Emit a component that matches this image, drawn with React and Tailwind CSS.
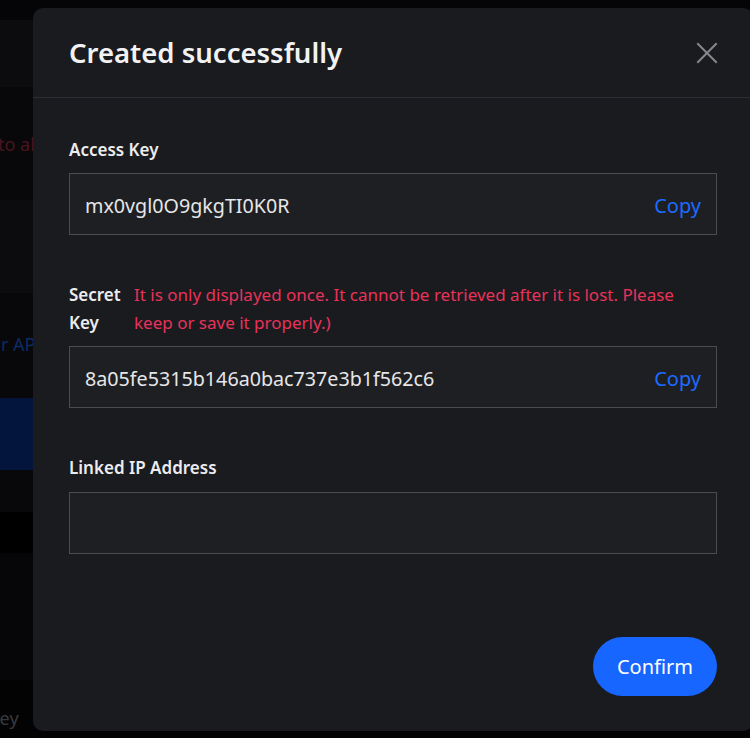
import { useState } from "react";

function Field({ value, copy }) {
  return (
    <div className="flex h-[62px] items-center justify-between border border-[#4b4c50] bg-[#1e1f22] px-[15px] pt-[3px]">
      <span className="text-[19.7px] text-[#e6e6e8]">{value}</span>
      {copy && (
        <button className="text-[20px] text-[#1c6bff]">Copy</button>
      )}
    </div>
  );
}

export default function App() {
  const [ip, setIp] = useState("");

  return (
    <div
      className="relative h-[738px] w-[750px] overflow-hidden bg-[#050507]"
      style={{ fontFamily: '"Noto Sans", "Open Sans", sans-serif' }}
    >
      {/* dimmed page behind the dialog */}
      <div className="flex flex-col text-[18px] leading-[24px]">
        <div className="h-[20px]" />
        <div className="h-[67px] bg-[#0c0c0e]" />
        <div className="flex h-[113px] items-center bg-[#08080a]">
          <span className="-ml-[2px] text-[#4a1420]">to all</span>
        </div>
        <div className="h-[93px] border-r border-[#111114] bg-[#0c0c0e]" />
        <div className="h-[105px] bg-[#08080a] pt-[39px]">
          <span className="-ml-[10px] text-[#0d2b66]">or API</span>
        </div>
        <div className="h-[72px] bg-[#03143d]" />
        <div className="h-[42px] bg-[#08080a]" />
        <div className="h-[41px] bg-black" />
        <div className="h-[127px] bg-[#060608]" />
        <div className="h-[58px] bg-[#030304] pt-[26px]">
          <span className="-ml-[10px] text-[#3a3a3e]">key</span>
        </div>
      </div>

      {/* dialog */}
      <div className="absolute left-[33px] top-[8px] flex h-[723px] w-[720px] flex-col rounded-[10px] bg-[#1a1b1f]">
        <div className="flex h-[90px] items-center justify-between border-b border-[#2c2e35] pl-[36px] pr-[35px]">
          <h2 className="text-[27.5px] font-semibold text-[#f2f2f3]">
            Created successfully
          </h2>
          <svg width="22" height="22" viewBox="0 0 22 22">
            <path
              d="M2 2 L20 20 M20 2 L2 20"
              stroke="#85878d"
              strokeWidth="2"
              strokeLinecap="square"
            />
          </svg>
        </div>

        <div className="flex flex-1 flex-col px-[36px] pt-[40px] pb-[35px]">
          <label className="mb-[11px] text-[17px] font-semibold leading-[24px] text-[#ececee]">
            Access Key
          </label>
          <Field value="mx0vgl0O9gkgTI0K0R" copy />

          <div className="mb-[9px] mt-[46px] flex">
            <label className="w-[65px] shrink-0 text-[17px] font-semibold leading-[28px] text-[#ececee]">
              Secret Key
            </label>
            <p className="text-[17px] leading-[28px] text-[#e8325a]">
              It is only displayed once. It cannot be retrieved after it is
              lost. Please keep or save it properly.)
            </p>
          </div>
          <Field value="8a05fe5315b146a0bac737e3b1f562c6" copy />

          <label className="mb-[12px] mt-[48px] text-[17px] font-semibold leading-[24px] text-[#ececee]">
            Linked IP Address
          </label>
          <input
            value={ip}
            onChange={(e) => setIp(e.target.value)}
            className="h-[62px] border border-[#4b4c50] bg-[#1e1f22] px-[15px] text-[20px] text-[#e6e6e8] outline-none"
          />

          <div className="mt-auto flex justify-end">
            <button className="h-[59px] w-[124px] rounded-full bg-[#1766ff] text-[20px] text-white">
              Confirm
            </button>
          </div>
        </div>
      </div>
    </div>
  );
}
